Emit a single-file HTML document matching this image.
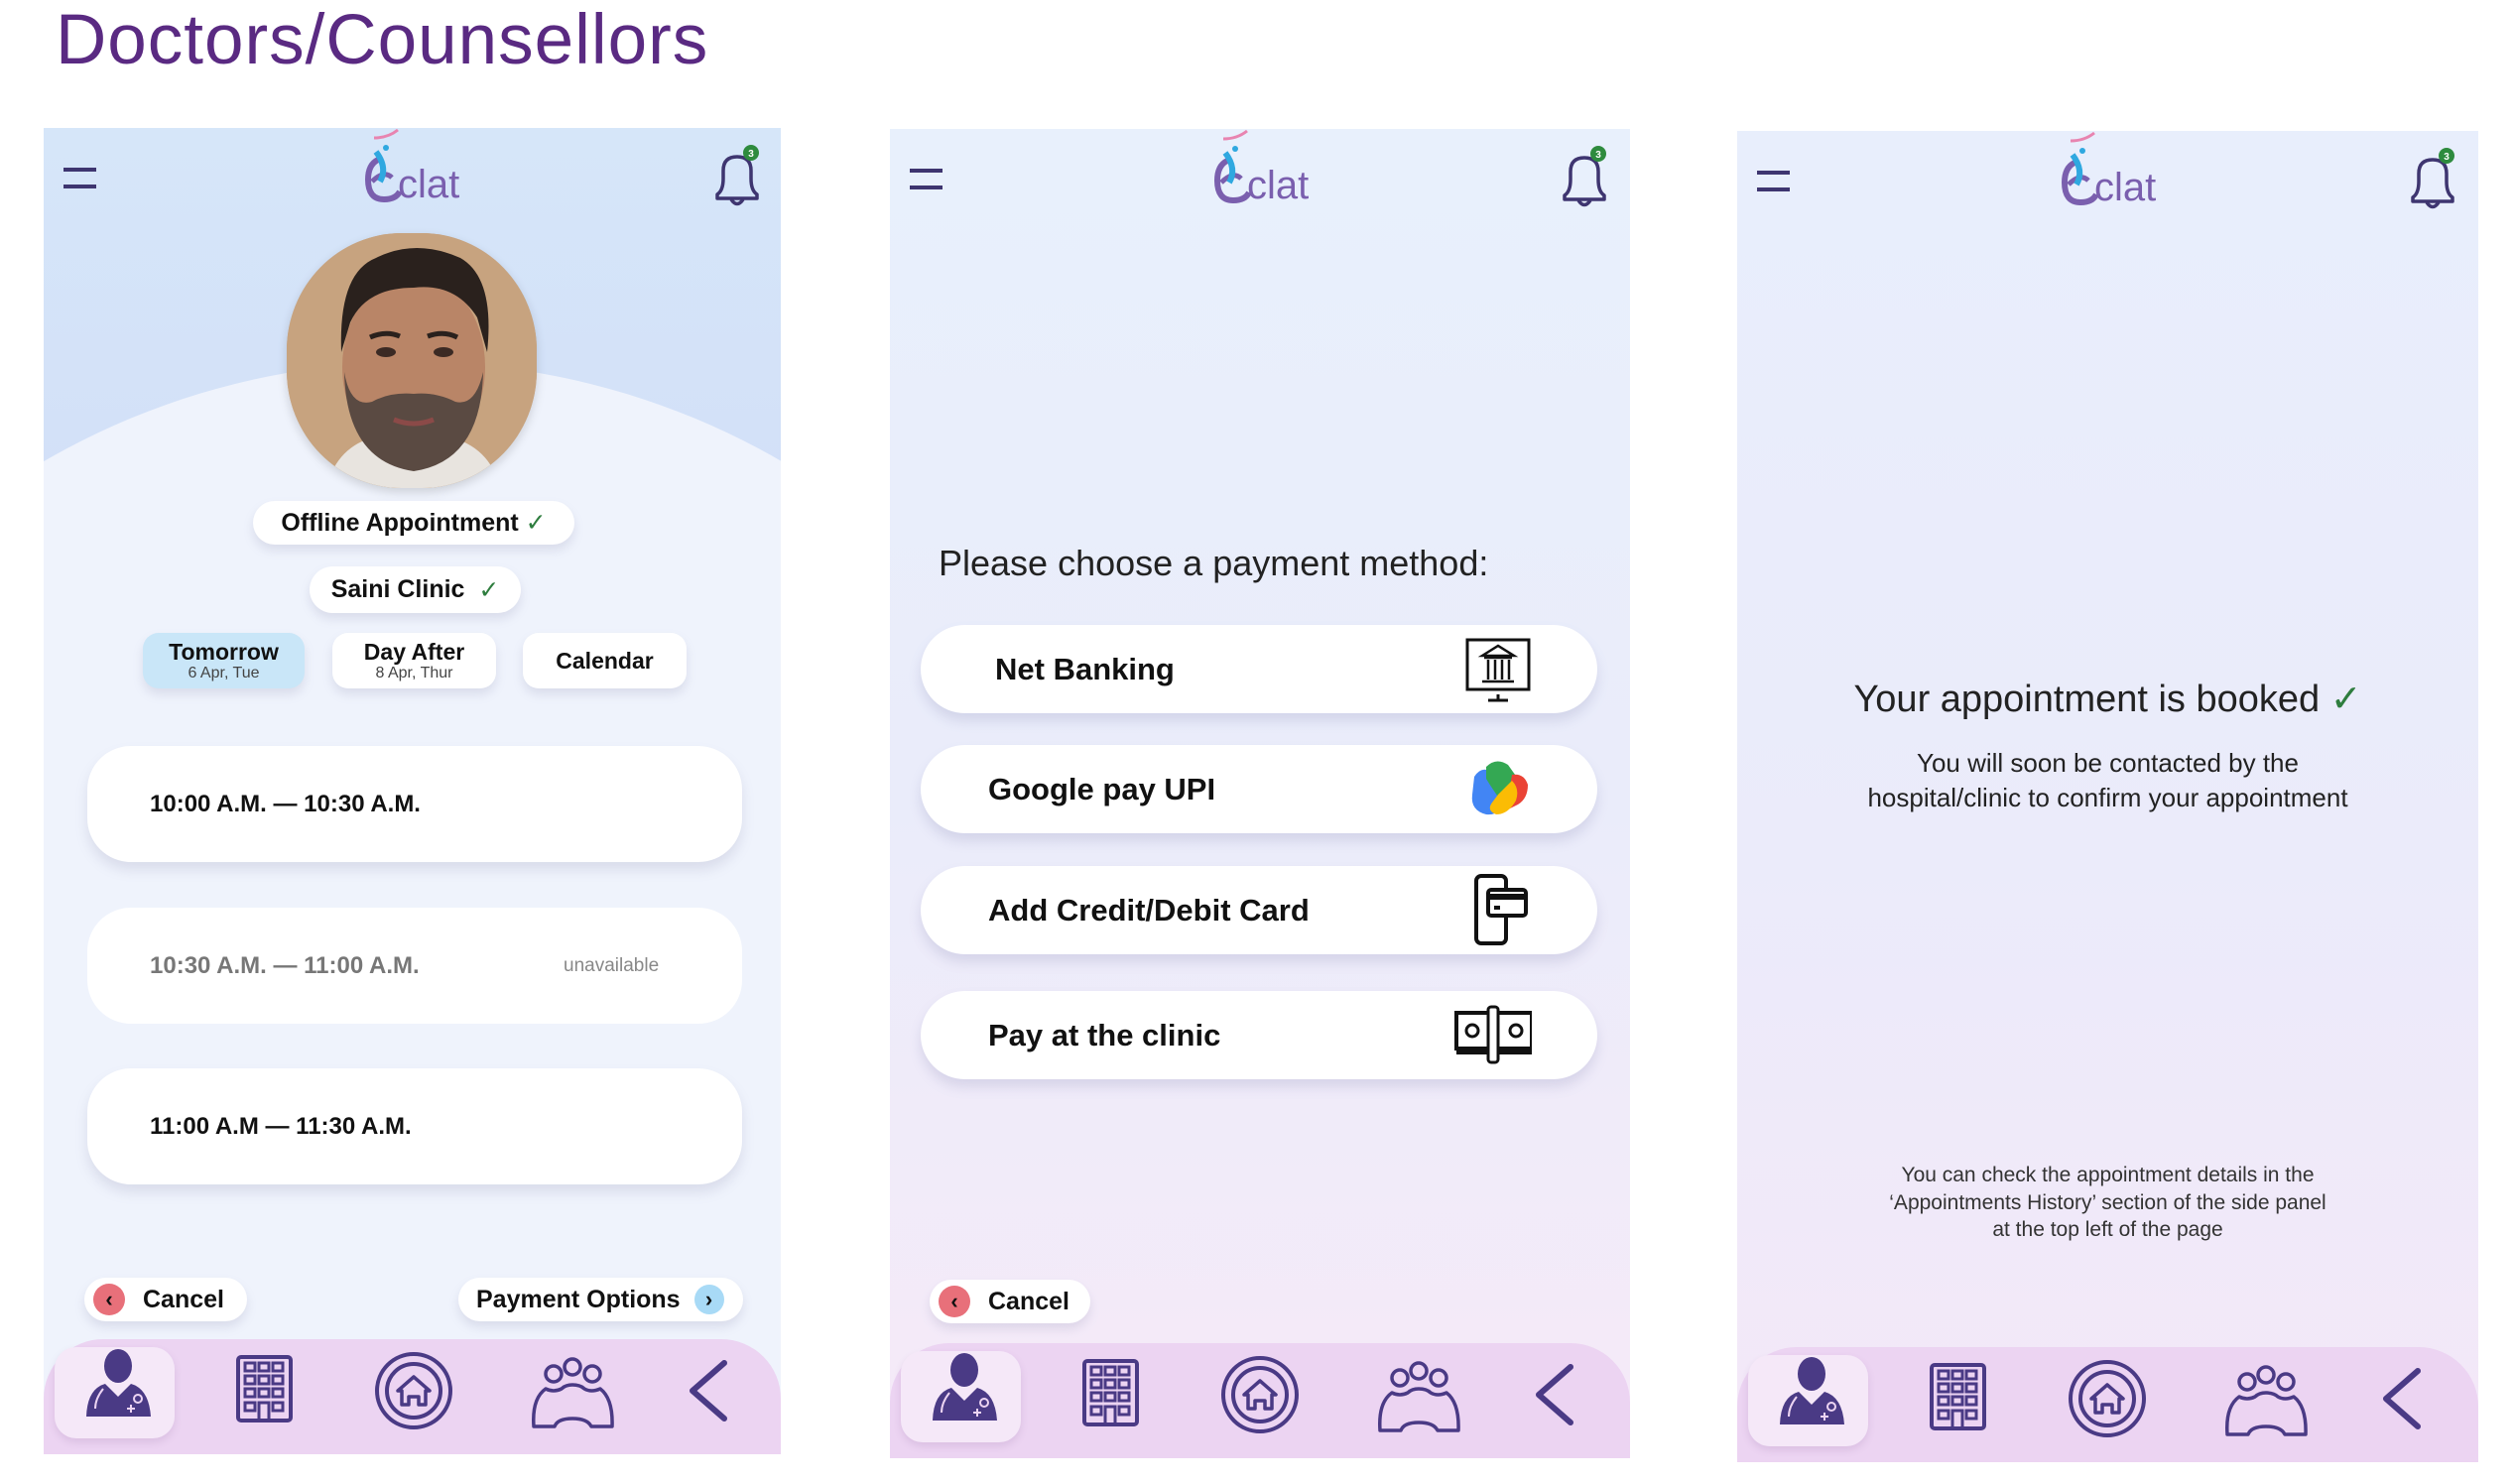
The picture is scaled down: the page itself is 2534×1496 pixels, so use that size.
<!DOCTYPE html>
<html style="overflow:hidden;width:2534px;height:1496px"><head><meta charset="utf-8">
<style>
*{margin:0;padding:0;box-sizing:border-box}
body{width:2534px;height:1496px;background:#fff;position:relative;overflow:hidden;font-family:"Liberation Sans",sans-serif;color:#111}
.abs{position:absolute}
.title{left:56px;top:0px;font-size:71px;color:#5a2a82;letter-spacing:1px}
.panel{position:absolute;overflow:hidden}
.pill{position:absolute;background:#fff;border-radius:999px;box-shadow:0 6px 10px rgba(120,120,160,.18);display:flex;align-items:center}
.nav{position:absolute;left:0;right:0;bottom:0;height:116px;background:#ecd4f2;border-radius:60px 60px 0 0}
.ham{position:absolute;width:33px;height:21px;border-top:4px solid #3e3570;border-bottom:4px solid #3e3570}
.slot{position:absolute;left:44px;width:660px;height:117px;background:#fff;border-radius:44px;box-shadow:0 8px 12px rgba(120,120,160,.18);font-weight:bold;font-size:24px;display:flex;align-items:center;padding-left:63px}
.pm{position:absolute;left:31px;width:682px;height:89px;background:#fff;border-radius:45px;box-shadow:0 8px 12px rgba(120,120,170,.2);font-size:31px;font-weight:bold;display:flex;align-items:center}
.chk{color:#2e7d3e;font-weight:normal}
</style></head><body>
<div class="abs title">Doctors/Counsellors</div>

<svg width="0" height="0" style="position:absolute;left:0;top:0">
<defs>
<g id="hdr">
  <path d="M-28 0 Q-38 5 -38 20 Q-38 40 -22 40 Q-10 40 -6 32" fill="none" stroke="#7a5fae" stroke-width="6"/>
  <path d="M-34 22 Q-22 10 -14 18" fill="none" stroke="#7a5fae" stroke-width="5"/>
  <path d="M-30 -8 Q-18 8 -26 22" fill="none" stroke="#2fa8e0" stroke-width="6"/>
  <circle cx="-20" cy="-12" r="3" fill="#2fa8e0"/>
  <path d="M-32 -22 Q-18 -22 -8 -30" fill="none" stroke="#e884b0" stroke-width="3"/>
  <text x="-8" y="38" font-size="40" fill="#7a5fae" font-family="Liberation Sans">clat</text>
</g>
<g id="bell">
  <path d="M0 40 L0 44 L40 44 L40 40 Q34 36 34 24 L34 16 Q34 2 20 2 Q6 2 6 16 L6 24 Q6 36 0 40 Z" fill="none" stroke="#3e3570" stroke-width="3.5" stroke-linejoin="round"/>
  <path d="M14 45 Q20 54 26 45" fill="none" stroke="#3e3570" stroke-width="3.5"/>
  <circle cx="34" cy="-2" r="8" fill="#2e8b3e"/>
  <text x="34" y="2" font-size="10" fill="#fff" text-anchor="middle" font-weight="bold" font-family="Liberation Sans">3</text>
</g>
<g id="navicons" fill="#4a3a85" stroke="#4a3a85">
  <g stroke="none">
    <ellipse cx="75" cy="27" rx="14" ry="17"/>
    <path d="M43 78 Q44 50 62 45 L75 58 L88 45 Q106 50 108 78 Z"/>
  </g>
  <path d="M60 50 Q52 60 52 70" fill="none" stroke="#ecd4f2" stroke-width="2"/>
  <circle cx="95" cy="60" r="4" fill="none" stroke="#ecd4f2" stroke-width="2"/>
  <path d="M84 70 h8 M88 66 v8" stroke="#ecd4f2" stroke-width="2"/>
  <g transform="translate(194,16)">
    <rect x="2" y="2" width="53" height="64" rx="3" fill="none" stroke-width="4"/>
    <g fill="none" stroke-width="3">
      <rect x="9" y="8" width="10" height="8"/><rect x="23" y="8" width="10" height="8"/><rect x="37" y="8" width="10" height="8"/>
      <rect x="9" y="21" width="10" height="8"/><rect x="23" y="21" width="10" height="8"/><rect x="37" y="21" width="10" height="8"/>
      <rect x="9" y="34" width="10" height="8"/><rect x="23" y="34" width="10" height="8"/><rect x="37" y="34" width="10" height="8"/>
      <rect x="9" y="48" width="10" height="8"/><path d="M23 66 V48 H33 V66"/><rect x="37" y="48" width="10" height="8"/>
    </g>
  </g>
  <g fill="none" stroke-width="4">
    <circle cx="373" cy="52" r="37"/>
    <circle cx="373" cy="52" r="27"/>
    <path d="M361 66 V52 H357 L373 38 L389 52 H385 V66 H378 V58 H368 V66 Z" stroke-width="3.5" stroke-linejoin="round"/>
  </g>
  <g fill="none" stroke-width="3.5">
    <circle cx="514" cy="35" r="8"/><circle cx="533" cy="28" r="8"/><circle cx="553" cy="35" r="8"/>
    <path d="M494 88 Q492 60 506 50 Q514 54 522 50 Q526 46 533 46 Q541 46 545 50 Q552 54 561 50 Q574 60 573 88 L552 88 Q548 80 533 80 Q518 80 515 88 Z" stroke-linejoin="round"/>
  </g>
  <path d="M686 24 L654 52 L686 80" fill="none" stroke-width="6" stroke-linecap="round" stroke-linejoin="round"/>
</g>
</defs>
</svg>

<!-- PANEL 1 -->
<div class="panel" style="left:44px;top:129px;width:743px;height:1337px;background:linear-gradient(#f2f4fc 0%,#f2f2fb 60%,#f6ecf8 100%)">
  <div class="abs" style="left:0;top:0;width:743px;height:420px;background:linear-gradient(#d6e6f9,#d2dff8)"></div>
  <div class="abs" style="left:-369px;top:236px;width:1482px;height:1482px;border-radius:50%;background:#eff3fc"></div>
  <div class="ham" style="left:20px;top:40px"></div>
  <svg class="abs" style="left:0;top:0" width="743" height="100"><use href="#hdr" x="365" y="32"/><use href="#bell" x="679" y="27"/></svg>
  <div class="abs" style="left:245px;top:106px;width:252px;height:257px;border-radius:46%;overflow:hidden;background:#c9a683;box-shadow:0 4px 10px rgba(0,0,0,.15)">
    <svg width="252" height="257">
      <rect width="252" height="257" fill="#c7a37f"/>
      <path d="M40 257 Q50 215 90 205 L162 205 Q205 215 215 257 Z" fill="#e8e4df"/>
      <ellipse cx="128" cy="135" rx="72" ry="95" fill="#b98567"/>
      <path d="M55 120 Q52 40 90 25 Q130 5 175 25 Q210 45 202 120 L192 85 Q170 50 128 55 Q80 55 64 90 Z" fill="#2a211d"/>
      <path d="M58 140 Q60 230 128 240 Q196 230 198 140 Q190 175 170 170 Q150 160 128 162 Q104 160 86 170 Q64 176 58 140 Z" fill="#5a4a42"/>
      <ellipse cx="100" cy="120" rx="10" ry="5" fill="#3b2a24"/><ellipse cx="158" cy="120" rx="10" ry="5" fill="#3b2a24"/>
      <path d="M84 105 Q100 98 114 104 M142 104 Q158 98 172 105" stroke="#2a211d" stroke-width="5" fill="none"/>
      <path d="M108 188 Q128 196 148 188" stroke="#8b4a48" stroke-width="5" fill="none"/>
    </svg>
  </div>
  <div class="pill" style="left:211px;top:376px;width:324px;height:44px;justify-content:center;font-size:25px;font-weight:bold">Offline Appointment&nbsp;<span class="chk">✓</span></div>
  <div class="pill" style="left:268px;top:442px;width:213px;height:47px;justify-content:center;font-size:25px;font-weight:bold">Saini Clinic&nbsp;&nbsp;<span class="chk">✓</span></div>
  <div class="pill" style="left:100px;top:509px;width:163px;height:56px;border-radius:16px;background:#c9e6f8;flex-direction:column;justify-content:center;line-height:1.1"><div style="font-size:23px;font-weight:bold">Tomorrow</div><div style="font-size:16px;color:#444">6 Apr, Tue</div></div>
  <div class="pill" style="left:291px;top:509px;width:165px;height:56px;border-radius:16px;flex-direction:column;justify-content:center;line-height:1.1"><div style="font-size:23px;font-weight:bold">Day After</div><div style="font-size:16px;color:#444">8 Apr, Thur</div></div>
  <div class="pill" style="left:483px;top:509px;width:165px;height:56px;border-radius:16px;justify-content:center;font-size:23px;font-weight:bold">Calendar</div>
  <div class="slot" style="top:623px">10:00 A.M. — 10:30 A.M.</div>
  <div class="slot" style="top:786px;color:#777;box-shadow:none">10:30 A.M. — 11:00 A.M.<span style="position:absolute;left:480px;font-size:19px;font-weight:normal;color:#888">unavailable</span></div>
  <div class="slot" style="top:948px">11:00 A.M — 11:30 A.M.</div>
  <div class="pill" style="left:41px;top:1159px;width:164px;height:44px;font-size:25px;font-weight:bold"><span style="display:inline-block;width:32px;height:32px;border-radius:50%;background:#e8707a;margin:0 18px 0 9px;text-align:center;line-height:31px;font-size:22px">‹</span>Cancel</div>
  <div class="pill" style="left:418px;top:1159px;width:287px;height:44px;font-size:25px;font-weight:bold;padding-left:18px">Payment Options<span style="display:inline-block;width:30px;height:30px;border-radius:50%;background:#a8daf6;margin-left:14px;text-align:center;line-height:29px;font-size:22px">›</span></div>
  <div class="nav">
    <div class="abs" style="left:11px;top:8px;width:121px;height:92px;border-radius:22px;background:#f5e8f8;box-shadow:0 4px 8px rgba(120,80,140,.15)"></div>
    <svg class="abs" style="left:0;top:0" width="743" height="116"><use href="#navicons"/></svg>
  </div>
</div>

<!-- PANEL 2 -->
<div class="panel" style="left:897px;top:130px;width:746px;height:1340px;background:linear-gradient(#e8f0fc 0%,#eaecfa 50%,#f6eaf8 100%)">
  <div class="ham" style="left:20px;top:40px"></div>
  <svg class="abs" style="left:0;top:0" width="746" height="100"><use href="#hdr" x="368" y="32"/><use href="#bell" x="680" y="27"/></svg>
  <div class="abs" style="left:49px;top:417px;font-size:36px;color:#222">Please choose a payment method:</div>
  <div class="pm" style="top:500px;padding-left:75px">Net Banking
    <svg class="abs" style="left:546px;top:12px" width="70" height="66"><rect x="5" y="3" width="62" height="50" fill="none" stroke="#111" stroke-width="3"/><path d="M36 58 v6 M26 64 h20" stroke="#111" stroke-width="3"/><path d="M20 19 L36 9 L52 19 Z M22 21 h28 M26 23 v20 M33 23 v20 M40 23 v20 M47 23 v20 M20 45 h32" fill="none" stroke="#111" stroke-width="2.5"/></svg>
  </div>
  <div class="pm" style="top:621px;padding-left:68px">Google pay UPI
    <svg class="abs" style="left:546px;top:10px" width="75" height="68"><path d="M12 22 Q20 10 30 18 L44 40 Q40 62 24 60 Q8 56 10 40 Z" fill="#4285f4"/><path d="M24 12 Q34 2 46 10 L56 24 L40 48 Q30 34 24 24 Z" fill="#34a853"/><path d="M50 20 Q62 18 66 30 Q66 44 56 50 L44 56 Z" fill="#ea4335"/><path d="M36 40 L50 26 Q58 34 54 46 Q46 60 34 60 Q24 56 30 48 Z" fill="#fbbc04"/></svg>
  </div>
  <div class="pm" style="top:743px;padding-left:68px">Add Credit/Debit Card
    <svg class="abs" style="left:556px;top:6px" width="60" height="78"><rect x="4" y="4" width="30" height="68" rx="5" fill="none" stroke="#111" stroke-width="4"/><rect x="16" y="18" width="38" height="26" rx="3" fill="#fff" stroke="#111" stroke-width="4"/><rect x="16" y="22" width="38" height="6" fill="#111"/><rect x="22" y="34" width="6" height="4" fill="#111"/></svg>
  </div>
  <div class="pm" style="top:869px;padding-left:68px">Pay at the clinic
    <svg class="abs" style="left:536px;top:12px" width="80" height="66"><rect x="4" y="10" width="76" height="36" fill="none" stroke="#111" stroke-width="4"/><rect x="4" y="46" width="76" height="6" fill="#111"/><circle cx="20" cy="28" r="6" fill="none" stroke="#111" stroke-width="3"/><circle cx="64" cy="28" r="6" fill="none" stroke="#111" stroke-width="3"/><rect x="36" y="4" width="10" height="56" rx="3" fill="#fff" stroke="#111" stroke-width="3"/></svg>
  </div>
  <div class="pill" style="left:40px;top:1160px;width:162px;height:44px;font-size:25px;font-weight:bold"><span style="display:inline-block;width:32px;height:32px;border-radius:50%;background:#e8707a;margin:0 18px 0 9px;text-align:center;line-height:31px;font-size:22px">‹</span>Cancel</div>
  <div class="nav">
    <div class="abs" style="left:11px;top:8px;width:121px;height:92px;border-radius:22px;background:#f5e8f8;box-shadow:0 4px 8px rgba(120,80,140,.15)"></div>
    <svg class="abs" style="left:0;top:0" width="746" height="116"><use href="#navicons"/></svg>
  </div>
</div>

<!-- PANEL 3 -->
<div class="panel" style="left:1751px;top:132px;width:747px;height:1342px;background:linear-gradient(#e8eefc 0%,#ebebfa 55%,#f4e8f8 100%)">
  <div class="ham" style="left:20px;top:40px"></div>
  <svg class="abs" style="left:0;top:0" width="747" height="100"><use href="#hdr" x="368" y="32"/><use href="#bell" x="681" y="27"/></svg>
  <div class="abs" style="left:0;width:747px;top:550px;text-align:center;font-size:38px;color:#222">Your appointment is booked <span class="chk">✓</span></div>
  <div class="abs" style="left:0;width:747px;top:620px;text-align:center;font-size:26px;line-height:35px;color:#222">You will soon be contacted by the<br>hospital/clinic to confirm your appointment</div>
  <div class="abs" style="left:0;width:747px;top:1039px;text-align:center;font-size:21px;line-height:27.5px;color:#333">You can check the appointment details in the<br>‘Appointments History’ section of the side panel<br>at the top left of the page</div>
  <div class="nav">
    <div class="abs" style="left:11px;top:8px;width:121px;height:92px;border-radius:22px;background:#f5e8f8;box-shadow:0 4px 8px rgba(120,80,140,.15)"></div>
    <svg class="abs" style="left:0;top:0" width="747" height="116"><use href="#navicons"/></svg>
  </div>
</div>
</body></html>
